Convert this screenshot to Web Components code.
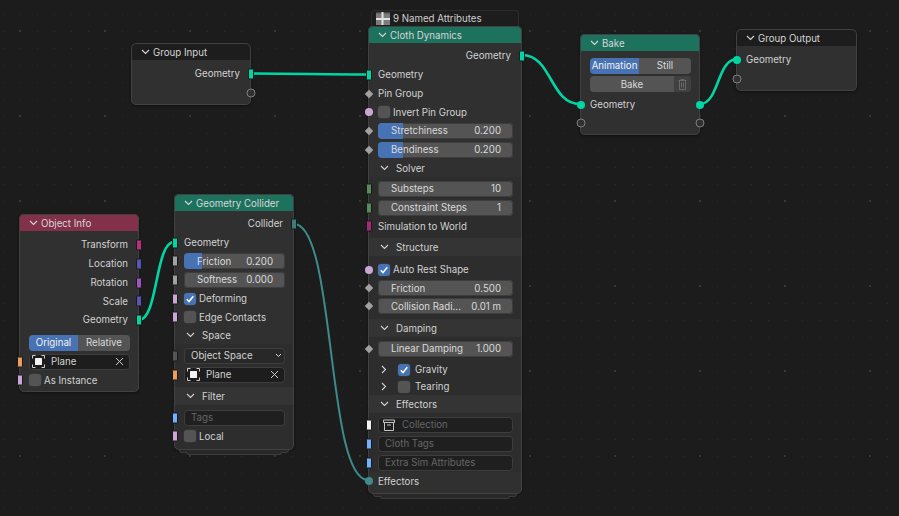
<!DOCTYPE html>
<html>
<head>
<meta charset="utf-8">
<style>
  html, body { margin: 0; background: #1d1d1d; }
</style>
</head>
<body>
<node-canvas>
  <node-card x="131" y="43" w="120" h="62" color="#1d1d1d" title="Group Input">
    <n-row h="19" pad="4" side="right" socket="square" color="#00d6a3" align="right">Geometry</n-row>
    <n-row h="19" side="right" socket="empty"></n-row>
  </node-card>

  <node-card x="19" y="214" w="120" h="178" color="#83314a" title="Object Info">
    <n-row h="19" pad="4" side="right" socket="square" color="#b5307f" align="right">Transform</n-row>
    <n-row h="19" side="right" socket="square" color="#5a55b5" align="right">Location</n-row>
    <n-row h="19" side="right" socket="square" color="#a052c0" align="right">Rotation</n-row>
    <n-row h="18" side="right" socket="square" color="#5a55b5" align="right">Scale</n-row>
    <n-row h="19" side="right" socket="square" color="#00d6a3" align="right">Geometry</n-row>
    <n-row h="19" pad="4"><n-toggle first="Original" second="Relative" split="49"></n-toggle></n-row>
    <n-row h="19" side="left" socket="square" color="#ed9e5c"><n-object>Plane</n-object></n-row>
    <n-row h="18" side="left" socket="square" color="#cca6d6"><n-check>As Instance</n-check></n-row>
  </node-card>

  <node-card x="174" y="194" w="120" h="256" color="#1d725e" title="Geometry Collider" stack>
    <n-row h="19" pad="3" side="right" socket="square" color="#3c7c7a" align="right">Collider</n-row>
    <n-row h="19" side="left" socket="square" color="#00d6a3">Geometry</n-row>
    <n-row h="18" side="left" socket="square" color="#a1a1a1"><n-slider value="0.200" fill="18">Friction</n-slider></n-row>
    <n-row h="19" side="left" socket="square" color="#a1a1a1"><n-slider value="0.000">Softness</n-slider></n-row>
    <n-row h="19" side="left" socket="square" color="#cca6d6"><n-check checked>Deforming</n-check></n-row>
    <n-row h="18" side="left" socket="square" color="#cca6d6"><n-check>Edge Contacts</n-check></n-row>
    <n-panel title="Space" top="2" bottom="3" flat>
      <n-row h="19" side="left" socket="square" color="#555555"><n-select>Object Space</n-select></n-row>
      <n-row h="19" side="left" socket="square" color="#ed9e5c"><n-object>Plane</n-object></n-row>
    </n-panel>
    <n-panel title="Filter" top="3" bottom="4" last>
      <n-row h="19" side="left" socket="square" color="#70b2ff"><n-input>Tags</n-input></n-row>
      <n-row h="18" side="left" socket="square" color="#cca6d6"><n-check>Local</n-check></n-row>
    </n-panel>
  </node-card>

  <node-card x="368" y="26" w="154" h="468" color="#1d725e" title="Cloth Dynamics" stack note="9 Named Attributes">
    <n-row h="19" pad="3" side="right" socket="square" color="#00d6a3" align="right">Geometry</n-row>
    <n-row h="19" side="left" socket="square" color="#00d6a3">Geometry</n-row>
    <n-row h="19" side="left" socket="diamond" color="#a1a1a1">Pin Group</n-row>
    <n-row h="18" side="left" socket="circle" color="#cca6d6"><n-check>Invert Pin Group</n-check></n-row>
    <n-row h="19" side="left" socket="diamond" color="#a1a1a1"><n-slider value="0.200" fill="25">Stretchiness</n-slider></n-row>
    <n-row h="19" side="left" socket="diamond" color="#a1a1a1"><n-slider value="0.200" fill="25">Bendiness</n-slider></n-row>
    <n-panel title="Solver" top="2" bottom="3" flat>
      <n-row h="19" side="left" socket="square" color="#598c5c"><n-slider value="10">Substeps</n-slider></n-row>
      <n-row h="19" side="left" socket="square" color="#598c5c"><n-slider value="1">Constraint Steps</n-slider></n-row>
      <n-row h="18" side="left" socket="square" color="#a62b75">Simulation to World</n-row>
    </n-panel>
    <n-panel title="Structure" top="4" bottom="4">
      <n-row h="19" side="left" socket="circle" color="#cca6d6"><n-check checked>Auto Rest Shape</n-check></n-row>
      <n-row h="18" side="left" socket="diamond" color="#a1a1a1"><n-slider value="0.500">Friction</n-slider></n-row>
      <n-row h="18" side="left" socket="diamond" color="#a1a1a1"><n-slider value="0.01 m">Collision Radi...</n-slider></n-row>
    </n-panel>
    <n-panel title="Damping" top="2" bottom="3">
      <n-row h="19" side="left" socket="diamond" color="#a1a1a1"><n-slider value="1.000">Linear Damping</n-slider></n-row>
    </n-panel>
    <n-sub>Gravity</n-sub>
    <n-sub off>Tearing</n-sub>
    <n-panel title="Effectors" top="2" bottom="0">
      <n-row h="19" side="left" socket="square" color="#f5f5f5"><n-input icon>Collection</n-input></n-row>
      <n-row h="19" side="left" socket="square" color="#70b2ff"><n-input>Cloth Tags</n-input></n-row>
      <n-row h="19" side="left" socket="square" color="#70b2ff"><n-input>Extra Sim Attributes</n-input></n-row>
    </n-panel>
    <n-row h="18" side="left" socket="circle" color="#3f8a8a">Effectors</n-row>
  </node-card>

  <node-card x="580" y="34" w="120" h="101" color="#1d725e" title="Bake">
    <n-row h="19" pad="5"><n-toggle first="Animation" second="Still" split="49"></n-toggle></n-row>
    <n-row h="18"><n-bake></n-bake></n-row>
    <n-row h="19" pad="2" side="both" socket="circle" color="#00d6a3">Geometry</n-row>
    <n-row h="18" side="both" socket="empty"></n-row>
  </node-card>

  <node-card x="736" y="29" w="121" h="62" color="#1d1d1d" title="Group Output">
    <n-row h="19" pad="4" side="left" socket="circle" color="#00d6a3">Geometry</n-row>
    <n-row h="19" side="left" socket="empty"></n-row>
  </node-card>
</node-canvas>

<script>
const widgetCss = `
  :host { display: block; flex: 1; min-width: 0; }
  * { box-sizing: border-box; }
`;

// free canvas with the dot grid; links sit under the nodes
class NodeCanvas extends HTMLElement {
  constructor() {
    super();
    this.attachShadow({ mode: "open" }).innerHTML = `
      <style>
        :host {
          display: block;
          position: relative;
          width: 899px;
          height: 516px;
          overflow: hidden;
          background-color: #1c1c1c;
          font: 9.7px Inter, "Noto Sans", sans-serif;
          color: #d2d2d2;
        }
        .small {
          position: absolute;
          inset: 0;
          background-image: radial-gradient(circle at .5px .5px, #2b2b2b .7px, transparent .8px);
          background-size: 17px 17px;
          background-position: 3px 14px;
        }
        .big {
          position: absolute;
          inset: 0;
          background-image: radial-gradient(circle at 1px 1px, #383838 1px, transparent 1.2px);
          background-size: 85px 85px;
          background-position: 19px 30px;
        }
        svg { position: absolute; inset: 0; }
        path { fill: none; stroke-linecap: round; }
      </style>
      <div class="small"></div>
      <div class="big"></div>
      <svg width="899" height="516" aria-hidden="true">
        <g stroke="#00d6a3" stroke-width="2.6">
          <path d="M251 73.5 C 300 73.5 320 74.5 367 74.5"/>
          <path d="M522 55 C 552 55 550 104 580 104"/>
          <path d="M700 104 C 719 104 717 59 737 59"/>
          <path d="M139 320 C 158 320 155 242 174 242"/>
        </g>
        <path stroke="#3f8a8a" stroke-width="2" d="M294 224 C 336 224 326 480 368 480"/>
      </svg>
      <slot></slot>`;
  }
}

class NodeCard extends HTMLElement {
  constructor() {
    super();
    this.attachShadow({ mode: "open" }).innerHTML = `
      <style>
        :host {
          display: flex;
          flex-direction: column;
          position: absolute;
          box-sizing: border-box;
          background: #303030;
          border-radius: 5px;
          box-shadow: 0 1px 3px rgba(0,0,0,.45);
        }
        [hidden] { display: none !important; }
        header {
          flex: none;
          box-sizing: border-box;
          height: 17px;
          display: flex;
          align-items: center;
          gap: 3px;
          padding: 1px 0 0 10px;
          border-radius: 5px 5px 0 0;
          color: #d6d6d6;
        }
        header svg { flex: none; }
        .edge {
          position: absolute;
          inset: 0;
          z-index: 1;
          border: 1px solid #414141;
          border-radius: 5px;
          pointer-events: none;
        }
        .stack, .stack::before {
          position: absolute;
          background: #282828;
          border: 1px solid #3c3c3c;
          border-top: 0;
          border-radius: 0 0 4px 4px;
          height: 3px;
          top: 100%;
          box-sizing: border-box;
        }
        .stack { left: 5px; right: 5px; }
        .stack::before { content: ""; left: 6px; right: 6px; }
        .note {
          position: absolute;
          left: 3px;
          right: 3px;
          top: -16px;
          height: 16px;
          box-sizing: border-box;
          display: flex;
          align-items: center;
          gap: 3px;
          padding: 0 4px;
          background: #1d1d1d;
          border: 1px solid #2c2c2c;
          border-bottom: 0;
          border-radius: 4px 4px 0 0;
          color: #d0d0d0;
        }
      </style>
      <div class="note" hidden></div>
      <div class="stack" hidden></div>
      <header></header>
      <slot></slot>
      <div class="edge"></div>`;
  }

  connectedCallback() {
    const root = this.shadowRoot;
    this.style.cssText = `left:${this.getAttribute("x")}px;top:${this.getAttribute("y")}px;` +
      `width:${this.getAttribute("w")}px;height:${this.getAttribute("h")}px;z-index:1`;
    const header = root.querySelector("header");
    header.style.background = this.getAttribute("color");
    header.innerHTML = `<svg width="9" height="6" viewBox="0 0 9 6"><path d="M1 1l3.5 3.5L8 1" fill="none" stroke="#d6d6d6" stroke-width="1.1"/></svg><span>${this.getAttribute("title")}</span>`;
    this.removeAttribute("title");
    if (this.hasAttribute("stack")) root.querySelector(".stack").hidden = false;
    if (this.hasAttribute("note")) {
      const note = root.querySelector(".note");
      note.hidden = false;
      note.innerHTML = `<svg width="14" height="13" viewBox="0 0 14 13"><path d="M0 0h14v13H0z" fill="#7c7c7c"/><path d="M0 0h14v1.5H0z" fill="#4a4a4a"/><path d="M6.5 0v13M0 7h14" stroke="#e4e4e4" stroke-width="2" fill="none"/></svg><span>${this.getAttribute("note")}</span>`;
    }
  }
}

// one line of a node, with an optional socket on its edge
class NRow extends HTMLElement {
  constructor() {
    super();
    this.attachShadow({ mode: "open" }).innerHTML = `
      <style>
        :host {
          display: flex;
          flex: none;
          align-items: center;
          position: relative;
          box-sizing: border-box;
          padding: 0 9px 0 10px;
        }
        :host([align="right"]) { justify-content: flex-end; padding-right: 11px; }
        i { position: absolute; z-index: 2; top: 50%; box-sizing: border-box; transform: translate(-50%, -50%); }
        i.left { left: .5px; }
        i.right { left: calc(100% - .5px); }
        i.square { width: 6px; height: 11px; border: 1px solid #181818; border-radius: 1px; }
        i.circle { width: 8px; height: 8px; border-radius: 50%; }
        i.diamond { width: 6px; height: 6px; transform: translate(-50%, -50%) rotate(45deg); }
        i.empty { width: 9px; height: 9px; border-radius: 50%; border: 1px solid #7e7e7e; background: #303030; }
      </style>
      <slot></slot>`;
  }

  connectedCallback() {
    this.style.height = this.getAttribute("h") + "px";
    if (this.hasAttribute("pad")) this.style.marginTop = this.getAttribute("pad") + "px";
    const kind = this.getAttribute("socket");
    if (!kind) return;
    const side = this.getAttribute("side");
    const sides = side === "both" ? ["left", "right"] : [side];
    for (const s of sides) {
      const dot = document.createElement("i");
      dot.className = `${s} ${kind}`;
      if (kind !== "empty") dot.style.background = this.getAttribute("color");
      this.shadowRoot.append(dot);
    }
  }
}

class NPanel extends HTMLElement {
  constructor() {
    super();
    this.attachShadow({ mode: "open" }).innerHTML = `
      <style>
        :host { display: block; flex: none; }
        header {
          height: 18px;
          display: flex;
          align-items: center;
          gap: 7px;
          padding-left: 12px;
          background: #343434;
          color: #d2d2d2;
        }
        :host([flat]) header { background: none; }
        section { background: #2d2d2d; }
        :host([last]) section { border-radius: 0 0 5px 5px; }
      </style>
      <header><svg width="9" height="6" viewBox="0 0 9 6"><path d="M1 1l3.5 3.5L8 1" fill="none" stroke="#d2d2d2" stroke-width="1.1"/></svg><span></span></header>
      <section><slot></slot></section>`;
  }

  connectedCallback() {
    this.shadowRoot.querySelector("span").textContent = this.getAttribute("title");
    this.removeAttribute("title");
    const section = this.shadowRoot.querySelector("section");
    section.style.paddingTop = this.getAttribute("top") + "px";
    section.style.paddingBottom = this.getAttribute("bottom") + "px";
  }
}

// collapsed sub panel with its checkbox
class NSub extends HTMLElement {
  constructor() {
    super();
    this.attachShadow({ mode: "open" }).innerHTML = `
      <style>
        :host {
          display: flex;
          flex: none;
          align-items: center;
          height: 17px;
          padding-left: 13px;
          background: #2d2d2d;
          color: #d2d2d2;
        }
        svg.arrow { margin-right: 11px; }
        n-check { flex: none; gap: 5px; }
      </style>
      <svg class="arrow" width="6" height="9" viewBox="0 0 6 9"><path d="M1 1l3.5 3.5L1 8" fill="none" stroke="#d2d2d2" stroke-width="1.1"/></svg>
      <n-check><slot></slot></n-check>`;
  }

  connectedCallback() {
    const check = this.shadowRoot.querySelector("n-check");
    if (!this.hasAttribute("off")) check.setAttribute("checked", "");
  }
}

class NSlider extends HTMLElement {
  constructor() {
    super();
    this.attachShadow({ mode: "open" }).innerHTML = `
      <style>
        ${widgetCss}
        div {
          position: relative;
          height: 16px;
          display: flex;
          align-items: center;
          justify-content: space-between;
          padding: 0 12px 0 13px;
          background: #545454;
          border-radius: 4px;
          box-shadow: inset 0 0 0 1px #3d3d3d;
          overflow: hidden;
          white-space: nowrap;
          color: #dadada;
        }
        b { position: absolute; left: 0; top: 0; bottom: 0; background: #4772b3; }
        span { position: relative; }
        .value { margin-left: 6px; }
      </style>
      <div><b></b><span><slot></slot></span><span class="value"></span></div>`;
  }

  connectedCallback() {
    this.shadowRoot.querySelector(".value").textContent = this.getAttribute("value");
    this.shadowRoot.querySelector("b").style.width = (this.getAttribute("fill") || 0) + "px";
  }
}

class NCheck extends HTMLElement {
  constructor() {
    super();
    this.attachShadow({ mode: "open" }).innerHTML = `
      <style>
        ${widgetCss}
        :host { display: flex; align-items: center; gap: 3px; white-space: nowrap; }
        b {
          flex: none;
          width: 12px;
          height: 12px;
          display: flex;
          align-items: center;
          justify-content: center;
          background: #545454;
          border-radius: 3px;
          box-shadow: 0 0 0 .5px #3d3d3d;
        }
        svg { display: none; }
        :host([checked]) b { background: #4772b3; }
        :host([checked]) svg { display: block; }
      </style>
      <b><svg width="10" height="10" viewBox="0 0 10 10"><path d="M1.8 5.2l2.2 2.3 4.3-5.2" fill="none" stroke="#fff" stroke-width="1.5"/></svg></b>
      <slot></slot>`;
  }
}

class NToggle extends HTMLElement {
  constructor() {
    super();
    this.attachShadow({ mode: "open" }).innerHTML = `
      <style>
        ${widgetCss}
        div {
          height: 16px;
          display: flex;
          border-radius: 4px;
          overflow: hidden;
          box-shadow: inset 0 0 0 1px #3d3d3d;
        }
        span { display: flex; align-items: center; justify-content: center; }
        .on { background: #4772b3; color: #f2f2f2; flex: none; }
        .off { background: #545454; color: #dadada; flex: 1; }
      </style>
      <div><span class="on"></span><span class="off"></span></div>`;
  }

  connectedCallback() {
    const on = this.shadowRoot.querySelector(".on");
    on.textContent = this.getAttribute("first");
    on.style.width = this.getAttribute("split") + "px";
    this.shadowRoot.querySelector(".off").textContent = this.getAttribute("second");
  }
}

class NObject extends HTMLElement {
  constructor() {
    super();
    this.attachShadow({ mode: "open" }).innerHTML = `
      <style>
        ${widgetCss}
        div {
          height: 16px;
          display: flex;
          align-items: center;
          padding: 0 6px 0 3px;
          background: #1d1d1d;
          border-radius: 4px;
          box-shadow: inset 0 0 0 1px #3d3d3d;
          color: #d2d2d2;
        }
        span { flex: 1; margin-left: 6px; }
        svg { flex: none; display: block; }
      </style>
      <div>
        <svg width="13" height="13" viewBox="0 0 13 13"><path d="M.5 3.5v-3h3M9.5.5h3v3M12.5 9.5v3h-3M3.5 12.5h-3v-3" fill="none" stroke="#cfcfcf"/><rect x="3" y="3" width="7" height="7" rx=".5" fill="#f2f2f2"/></svg>
        <span><slot></slot></span>
        <svg width="9" height="9" viewBox="0 0 9 9"><path d="M1 1l7 7M8 1L1 8" stroke="#cfcfcf"/></svg>
      </div>`;
  }
}

class NSelect extends HTMLElement {
  constructor() {
    super();
    this.attachShadow({ mode: "open" }).innerHTML = `
      <style>
        ${widgetCss}
        div {
          height: 16px;
          display: flex;
          align-items: center;
          justify-content: space-between;
          padding: 0 3px 0 7px;
          background: #282828;
          border-radius: 4px;
          box-shadow: inset 0 0 0 1px #3d3d3d;
          color: #d2d2d2;
        }
      </style>
      <div><slot></slot><svg width="7" height="5" viewBox="0 0 7 5"><path d="M1 1l2.5 2.5L6 1" fill="none" stroke="#dcdcdc"/></svg></div>`;
  }
}

class NInput extends HTMLElement {
  constructor() {
    super();
    this.attachShadow({ mode: "open" }).innerHTML = `
      <style>
        ${widgetCss}
        div {
          height: 16px;
          display: flex;
          align-items: center;
          gap: 6px;
          padding: 0 7px;
          background: #1f1f1f;
          border-radius: 4px;
          box-shadow: inset 0 0 0 1px #3d3d3d;
          color: #666;
          white-space: nowrap;
        }
        svg { display: none; flex: none; }
        :host([icon]) svg { display: block; }
        :host([icon]) div { padding-left: 5px; gap: 7px; }
      </style>
      <div>
        <svg width="12" height="12" viewBox="0 0 12 12"><path d="M.5 1h11v2.5H.5zM1.5 3.5v8h9v-8M4 6h4" fill="none" stroke="#c4c4c4"/></svg>
        <slot></slot>
      </div>`;
  }
}

class NBake extends HTMLElement {
  constructor() {
    super();
    this.attachShadow({ mode: "open" }).innerHTML = `
      <style>
        ${widgetCss}
        div { height: 16px; display: flex; border-radius: 4px; overflow: hidden; box-shadow: inset 0 0 0 1px #3d3d3d; }
        span { flex: 1; display: flex; align-items: center; justify-content: center; background: #545454; color: #dadada; }
        em { flex: none; width: 17px; display: flex; align-items: center; justify-content: center; background: #404040; }
      </style>
      <div>
        <span>Bake</span>
        <em><svg width="9" height="11" viewBox="0 0 9 11"><path d="M.5 1.5h8M3 1.5v-1h3v1M1.5 1.5v9h6v-9M3.5 3.5v5M5.5 3.5v5" fill="none" stroke="#686868"/></svg></em>
      </div>`;
  }
}

customElements.define("n-row", NRow);
customElements.define("n-check", NCheck);
customElements.define("n-slider", NSlider);
customElements.define("n-toggle", NToggle);
customElements.define("n-object", NObject);
customElements.define("n-select", NSelect);
customElements.define("n-input", NInput);
customElements.define("n-bake", NBake);
customElements.define("n-panel", NPanel);
customElements.define("n-sub", NSub);
customElements.define("node-card", NodeCard);
customElements.define("node-canvas", NodeCanvas);
</script>
</body>
</html>
